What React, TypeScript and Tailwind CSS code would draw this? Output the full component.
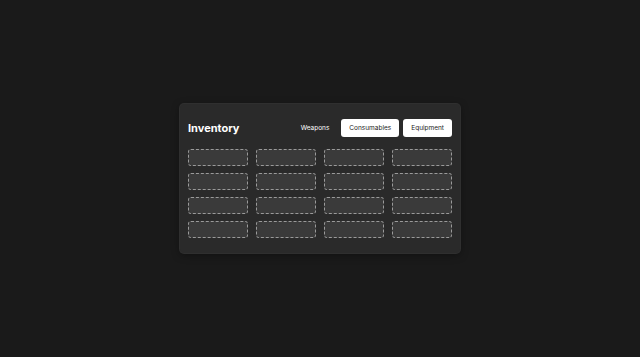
import React, { useState } from 'react';

const tabs = ['Weapons', 'Consumables', 'Equipment'];

export default function App() {
  const [active, setActive] = useState('Weapons');
  const slots = Array.from({ length: 16 }, (_, i) => i);

  return (
    <div className="min-h-screen w-full bg-[#1a1a1a] flex items-center justify-center" style={{ fontFamily: 'Inter, "Liberation Sans", sans-serif' }}>
      <div className="w-[280px] bg-[#2a2a2a] rounded-[4px] px-2 pt-[15px] pb-[15px] shadow-[0_0_0_1px_#2f2f2f,0_2px_8px_rgba(0,0,0,0.4)]">
        {/* Header */}
        <div className="flex items-center justify-between h-[18px] mb-3">
          <h1 className="text-[11px] font-bold text-white leading-none">Inventory</h1>
          <div className="flex items-center gap-1">
            {tabs.map(t => (
              <button key={t} onClick={() => setActive(t)}
                className={`h-[18px] px-2 rounded-[3px] text-[6.5px] leading-none font-normal ${active === t ? 'text-white bg-transparent' : 'bg-white text-[#222]'}`}>
                {t}
              </button>
            ))}
          </div>
        </div>

        {/* Slots */}
        <div className="grid grid-cols-4 gap-x-2 gap-y-[7px]">
          {slots.map(s => (
            <div key={s} className="h-[17px] bg-[#3a3a3a] border border-dashed border-[#9a9a9a] rounded-[3px]" />
          ))}
        </div>
      </div>
    </div>
  );
}
